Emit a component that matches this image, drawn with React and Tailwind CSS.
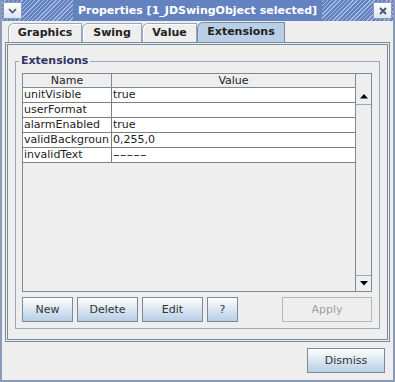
import React from 'react'

const rows = [
  ['unitVisible', 'true'],
  ['userFormat', ''],
  ['alarmEnabled', 'true'],
  ['validBackgroun', '0,255,0'],
  ['invalidText', '-----'],
]

const tabs = [
  { label: 'Graphics', w: 'w-[74px]' },
  { label: 'Swing', w: 'w-[60px]' },
  { label: 'Value', w: 'w-[55px]' },
  { label: 'Extensions', w: 'w-[88px]', active: true },
]

const Button = ({ children, className = '', disabled }) => (
  <button
    className={`h-[25px] border text-[11px] leading-none ${
      disabled
        ? 'border-[#b8b8b8] bg-[#eeeeee] text-[#a0a0a0]'
        : 'border-[#7a8a99] bg-[linear-gradient(#ffffff,#dde8f3_45%,#b8cfe5)] text-[#333333]'
    } ${className}`}
  >
    {children}
  </button>
)

const ArrowButton = ({ down }) => (
  <div className={`h-[16px] flex items-center justify-center bg-[#eeeeee] border-[#99a8bf] ${down ? 'border-t' : 'border-b'}`}>
    <svg width="8" height="5" viewBox="0 0 8 5">
      {down ? <path d="M0 0h8L4 4.5z" fill="#000" /> : <path d="M0 4.5h8L4 0z" fill="#000" />}
    </svg>
  </div>
)

export default function App() {
  return (
    <div className="w-[395px] h-[382px] bg-[#eeeeee] flex flex-col overflow-hidden border-l-2 border-r-2 border-b-2 border-[#8a9ab8] font-['DejaVu_Sans',sans-serif] text-[11px] text-[#222222]">
      {/* Title bar */}
      <div className="h-[21px] flex items-center px-[1px] bg-[repeating-linear-gradient(135deg,#6382bf_0px,#6382bf_2px,#a5bbe2_2px,#a5bbe2_3px)]">
        <div className="w-[19px] h-[17px] border border-[#8c9bb5] bg-[linear-gradient(#ffffff,#dde5f0)] flex items-center justify-center">
          <svg width="9" height="6" viewBox="0 0 9 6">
            <path d="M1 1l3.5 3.5L8 1" stroke="#445577" strokeWidth="1.6" fill="none" />
          </svg>
        </div>
        <div className="flex-1 flex justify-center">
          <span className="bg-[#6382bf] px-[5px] text-white font-bold text-[11px] leading-[21px]">
            Properties [1_JDSwingObject selected]
          </span>
        </div>
        <div className="w-[19px] h-[17px] border border-[#8c9bb5] bg-[linear-gradient(#ffffff,#dde5f0)] flex items-center justify-center">
          <svg width="8" height="8" viewBox="0 0 8 8">
            <path d="M1 1l6 6M7 1L1 7" stroke="#445577" strokeWidth="1.8" />
          </svg>
        </div>
      </div>

      {/* Tabs */}
      <div className="mt-[2px] ml-[6px] h-[19px] flex items-end">
        {tabs.map((t) => (
          <div
            key={t.label}
            className={`${t.w} h-[19px] flex items-center justify-center font-bold border-t border-l border-r rounded-tl-[6px] ${
              t.active
                ? 'bg-[#b8cfe5] border-[#7a8a99] h-[20px]'
                : 'bg-[#eeeeee] border-[#9aa7b8] shadow-[inset_1px_1px_0_#ffffff]'
            }`}
          >
            {t.label}
          </div>
        ))}
      </div>

      {/* Tab pane */}
      <div className="ml-[3px] mr-[3px] h-[300px] border-[3px] border-double border-[#7a8a99] px-[7px] pt-[16px]">
        {/* Titled border */}
        <div className="relative h-[268px] border border-[#99a8bf] pt-[11px] pl-[6px]">
          <span className="absolute left-[3px] top-[-8px] bg-[#eeeeee] px-[2px] font-bold text-[#333366] leading-[14px]">
            Extensions
          </span>
          {/* Table viewport */}
          <div className="w-[350px] h-[219px] border border-[#7a8a99] flex">
            <div className="flex-1 flex flex-col">
              <div className="h-[14px] flex border-b border-[#7a8a99] leading-[13px]">
                <div className="w-[89px] border-r border-[#7a8a99] text-center">Name</div>
                <div className="flex-1 text-center">Value</div>
              </div>
              {rows.map(([k, v]) => (
                <div key={k} className="h-[15px] flex bg-white border-b border-[#808080] leading-[14px]">
                  <div className="w-[89px] border-r border-[#808080] pl-[1px] overflow-hidden whitespace-nowrap">{k}</div>
                  <div className="flex-1 pl-[1px]">
                    {v === '-----' ? <span className="inline-block origin-left scale-x-[1.7]">{v}</span> : v}
                  </div>
                </div>
              ))}
            </div>
            {/* Scrollbar */}
            <div className="w-[16px] border-l border-[#7a8a99] flex flex-col">
              <div className="h-[15px]" />
              <ArrowButton />
              <div className="flex-1 bg-[#eeeeee]" />
              <ArrowButton down />
            </div>
          </div>

          {/* Buttons */}
          <div className="mt-[5px] flex w-[350px]">
            <Button className="w-[51px]">New</Button>
            <Button className="w-[61px] ml-[4px]">Delete</Button>
            <Button className="w-[61px] ml-[4px]">Edit</Button>
            <Button className="w-[31px] ml-[4px]">?</Button>
            <Button className="w-[90px] ml-auto" disabled>Apply</Button>
          </div>
        </div>
      </div>

      {/* Footer */}
      <div className="mt-[6px] mr-[8px] flex justify-end">
        <Button className="w-[78px]">Dismiss</Button>
      </div>
    </div>
  )
}
